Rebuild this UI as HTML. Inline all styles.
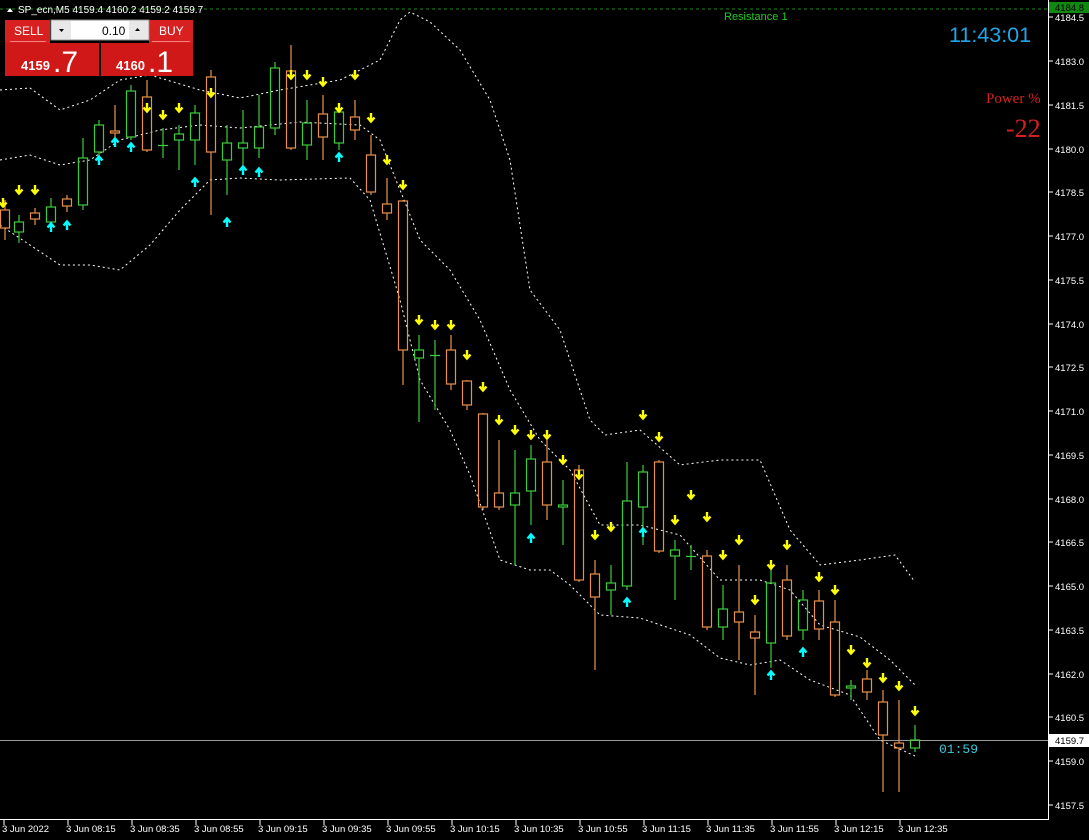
<!DOCTYPE html>
<html><head><meta charset="utf-8"><style>
html,body{margin:0;padding:0;background:#000;width:1089px;height:840px;overflow:hidden}
svg{display:block}
text{font-family:"Liberation Sans","DejaVu Sans",sans-serif}
</style></head><body>
<svg width="1089" height="840" viewBox="0 0 1089 840" xmlns="http://www.w3.org/2000/svg">
<defs>
<g id="dn"><path d="M0,-5 V3 M-3.5,-0.5 L0,3.5 L3.5,-0.5" stroke="#ffff00" stroke-width="2.4" fill="none"/></g>
<g id="up"><path d="M0,5 V-3 M-3.5,0.5 L0,-3.5 L3.5,0.5" stroke="#00ffff" stroke-width="2.4" fill="none"/></g>
</defs>
<rect width="1089" height="840" fill="#000"/>
<line x1="0" y1="9" x2="1048" y2="9" stroke="#1a8a1a" stroke-dasharray="3,3"/>
<text x="724" y="20" font-size="11" fill="#22cc22">Resistance 1</text>
<line x1="0" y1="740.5" x2="1048" y2="740.5" stroke="#9a9a9a"/>
<g fill="none" stroke="#fff" stroke-width="1" stroke-dasharray="2,3">
<polyline points="0,90 30,88 60,110 90,100 120,80 150,75 200,90 240,98 280,90 340,80 380,60 400,20 410,12 430,22 460,50 490,100 510,160 530,290 560,330 590,420 605,435 640,430 680,465 720,460 760,460 790,530 820,565 860,560 895,555 915,582"/>
<polyline points="0,160 30,155 60,165 90,160 120,140 160,130 200,125 240,128 300,122 360,125 380,140 400,190 420,240 450,270 480,320 510,390 540,440 570,470 600,525 640,525 680,535 720,580 760,580 790,590 820,625 860,637 890,660 915,685"/>
<polyline points="0,225 30,245 60,265 90,265 120,270 150,245 180,210 210,180 240,178 280,180 350,178 370,200 400,300 420,380 450,430 470,475 500,560 530,570 550,570 570,585 600,615 640,618 690,635 720,658 750,665 780,660 810,680 850,695 880,740 915,756"/>
</g>
<g fill="none" stroke-width="1.2">
<g stroke="#e8914a">
<path d="M5,200V210M5,228V240M35,208V213M35,219V225M67,195V199M67,206V212M115,105V131M115,133V140M147,80V97M147,150V152M211,70V77M211,152V215M291,45V71M291,148V150M323,95V114M323,137V160M355,100V117M355,130V140M371,135V155M371,192V195M387,178V204M387,213V220M403,200V201M403,350V385M451,335V350M451,384V390M467,380V381M467,405V410M483,413V414M483,507V510M499,440V493M499,507V510M547,440V462M547,505V520M579,465V470M579,580V582M595,560V574M595,597V670M659,460V462M659,551V553M707,550V556M707,627V630M739,565V612M739,622V660M755,615V632M755,638V695M787,565V580M787,636V640M819,590V601M819,629V640M835,600V622M835,695V697M867,670V679M867,692V700M883,690V702M883,735V792M899,700V743M899,748V792"/>
<rect x="0.5" y="210" width="9" height="18"/><rect x="30.5" y="213" width="9" height="6"/><rect x="62.5" y="199" width="9" height="7"/>
<rect x="110.5" y="131" width="9" height="2"/><rect x="142.5" y="97" width="9" height="53"/><rect x="206.5" y="77" width="9" height="75"/>
<rect x="286.5" y="71" width="9" height="77"/><rect x="318.5" y="114" width="9" height="23"/><rect x="350.5" y="117" width="9" height="13"/>
<rect x="366.5" y="155" width="9" height="37"/><rect x="382.5" y="204" width="9" height="9"/><rect x="398.5" y="201" width="9" height="149"/>
<rect x="446.5" y="350" width="9" height="34"/><rect x="462.5" y="381" width="9" height="24"/><rect x="478.5" y="414" width="9" height="93"/>
<rect x="494.5" y="493" width="9" height="14"/><rect x="542.5" y="462" width="9" height="43"/><rect x="574.5" y="470" width="9" height="110"/>
<rect x="590.5" y="574" width="9" height="23"/><rect x="654.5" y="462" width="9" height="89"/><rect x="702.5" y="556" width="9" height="71"/>
<rect x="734.5" y="612" width="9" height="10"/><rect x="750.5" y="632" width="9" height="6"/><rect x="782.5" y="580" width="9" height="56"/>
<rect x="814.5" y="601" width="9" height="28"/><rect x="830.5" y="622" width="9" height="73"/><rect x="862.5" y="679" width="9" height="13"/>
<rect x="878.5" y="702" width="9" height="33"/><rect x="894.5" y="743" width="9" height="5"/>
</g>
<g stroke="#3ccc3c">
<path d="M19,215V222M19,232V243M51,198V207M51,222V228M83,138V158M83,205V210M99,120V125M99,152V160M131,85V91M131,137V140M163,128V158M158,145.5H168M179,125V134M179,140V170M195,105V113M195,140V165M227,125V143M227,160V195M243,110V143M243,148V165M259,95V127M259,148V158M275,62V68M275,128V135M307,100V123M307,145V160M339,105V112M339,143V150M419,335V350M419,358V422M435,340V410M430,355.5H440M515,450V493M515,505V565M531,445V459M531,491V525M563,480V505M563,507V545M611,565V583M611,590V615M627,462V501M627,586V590M643,465V472M643,507V545M675,540V550M675,556V600M691,545V570M686,556.5H696M723,585V609M723,627V640M771,560V583M771,643V668M803,590V600M803,630V640M851,680V686M851,688V700M915,725V740M915,748V752"/>
<rect x="14.5" y="222" width="9" height="10"/><rect x="46.5" y="207" width="9" height="15"/><rect x="78.5" y="158" width="9" height="47"/>
<rect x="94.5" y="125" width="9" height="27"/><rect x="126.5" y="91" width="9" height="46"/><rect x="174.5" y="134" width="9" height="6"/>
<rect x="190.5" y="113" width="9" height="27"/><rect x="222.5" y="143" width="9" height="17"/><rect x="238.5" y="143" width="9" height="5"/>
<rect x="254.5" y="127" width="9" height="21"/><rect x="270.5" y="68" width="9" height="60"/><rect x="302.5" y="123" width="9" height="22"/>
<rect x="334.5" y="112" width="9" height="31"/><rect x="414.5" y="350" width="9" height="8"/><rect x="510.5" y="493" width="9" height="12"/>
<rect x="526.5" y="459" width="9" height="32"/><rect x="558.5" y="505" width="9" height="2"/><rect x="606.5" y="583" width="9" height="7"/>
<rect x="622.5" y="501" width="9" height="85"/><rect x="638.5" y="472" width="9" height="35"/><rect x="670.5" y="550" width="9" height="6"/>
<rect x="718.5" y="609" width="9" height="18"/><rect x="766.5" y="583" width="9" height="60"/><rect x="798.5" y="600" width="9" height="30"/>
<rect x="846.5" y="686" width="9" height="2"/><rect x="910.5" y="740" width="9" height="8"/>
</g>
</g>
<use href="#dn" x="3" y="203"/><use href="#dn" x="19" y="190"/><use href="#dn" x="35" y="190"/><use href="#dn" x="147" y="108"/>
<use href="#dn" x="163" y="115"/><use href="#dn" x="179" y="108"/><use href="#dn" x="211" y="93"/><use href="#dn" x="291" y="75"/>
<use href="#dn" x="307" y="75"/><use href="#dn" x="323" y="82"/><use href="#dn" x="339" y="108"/><use href="#dn" x="355" y="75"/>
<use href="#dn" x="371" y="118"/><use href="#dn" x="387" y="160"/><use href="#dn" x="403" y="185"/><use href="#dn" x="419" y="320"/>
<use href="#dn" x="435" y="325"/><use href="#dn" x="451" y="325"/><use href="#dn" x="467" y="355"/><use href="#dn" x="483" y="387"/>
<use href="#dn" x="499" y="420"/><use href="#dn" x="515" y="430"/><use href="#dn" x="531" y="435"/><use href="#dn" x="547" y="435"/>
<use href="#dn" x="563" y="460"/><use href="#dn" x="579" y="475"/><use href="#dn" x="595" y="535"/><use href="#dn" x="611" y="527"/>
<use href="#dn" x="643" y="415"/><use href="#dn" x="659" y="437"/><use href="#dn" x="675" y="520"/><use href="#dn" x="691" y="495"/>
<use href="#dn" x="707" y="517"/><use href="#dn" x="723" y="555"/><use href="#dn" x="739" y="540"/><use href="#dn" x="755" y="600"/>
<use href="#dn" x="771" y="565"/><use href="#dn" x="787" y="545"/><use href="#dn" x="819" y="577"/><use href="#dn" x="835" y="590"/>
<use href="#dn" x="851" y="650"/><use href="#dn" x="867" y="663"/><use href="#dn" x="883" y="678"/><use href="#dn" x="899" y="686"/>
<use href="#dn" x="915" y="711"/>
<use href="#up" x="51" y="227"/><use href="#up" x="67" y="225"/><use href="#up" x="99" y="160"/><use href="#up" x="115" y="142"/>
<use href="#up" x="131" y="147"/><use href="#up" x="195" y="182"/><use href="#up" x="227" y="222"/><use href="#up" x="243" y="170"/>
<use href="#up" x="259" y="172"/><use href="#up" x="339" y="157"/><use href="#up" x="531" y="538"/><use href="#up" x="627" y="602"/>
<use href="#up" x="643" y="532"/><use href="#up" x="771" y="675"/><use href="#up" x="803" y="652"/>
<text x="949" y="42" font-size="21.5" fill="#1fa6e8">11:43:01</text>
<text x="986" y="103" font-size="15" fill="#d42020" style="font-family:'Liberation Serif',serif">Power %</text>
<text x="1006" y="137" font-size="26" fill="#d42020" style="font-family:'Liberation Serif',serif">-22</text>
<text x="939" y="753" font-size="13" fill="#3cc8d8" style="font-family:'Liberation Mono',monospace">01:59</text>
<line x1="1048.5" y1="0" x2="1048.5" y2="820" stroke="#fff"/>
<line x1="0" y1="819.5" x2="1049" y2="819.5" stroke="#fff"/>
<g stroke="#fff"><path d="M1049,17H1053M1049,61H1053M1049,105H1053M1049,149H1053M1049,192H1053M1049,236H1053M1049,280H1053M1049,324H1053M1049,367H1053M1049,411H1053M1049,455H1053M1049,499H1053M1049,542H1053M1049,586H1053M1049,630H1053M1049,674H1053M1049,717H1053M1049,761H1053M1049,805H1053"/>
<path d="M4,820V825M68,820V825M132,820V825M196,820V825M260,820V825M324,820V825M388,820V825M452,820V825M516,820V825M580,820V825M644,820V825M708,820V825M772,820V825M836,820V825M900,820V825"/></g>
<g font-size="9.5" fill="#fff">
<text x="1055" y="21">4184.5</text><text x="1055" y="65">4183.0</text><text x="1055" y="109">4181.5</text><text x="1055" y="153">4180.0</text>
<text x="1055" y="196">4178.5</text><text x="1055" y="240">4177.0</text><text x="1055" y="284">4175.5</text><text x="1055" y="328">4174.0</text>
<text x="1055" y="371">4172.5</text><text x="1055" y="415">4171.0</text><text x="1055" y="459">4169.5</text><text x="1055" y="503">4168.0</text>
<text x="1055" y="546">4166.5</text><text x="1055" y="590">4165.0</text><text x="1055" y="634">4163.5</text><text x="1055" y="678">4162.0</text>
<text x="1055" y="721">4160.5</text><text x="1055" y="765">4159.0</text><text x="1055" y="809">4157.5</text>
</g>
<rect x="1049" y="2" width="40" height="11" fill="#118811"/>
<text x="1055" y="11" font-size="9.5" fill="#000">4184.8</text>
<rect x="1049" y="734" width="40" height="13" fill="#fff"/>
<text x="1055" y="744" font-size="9.5" fill="#000">4159.7</text>
<g font-size="9.5" fill="#fff">
<text x="2" y="832">3 Jun 2022</text><text x="66" y="832">3 Jun 08:15</text><text x="130" y="832">3 Jun 08:35</text><text x="194" y="832">3 Jun 08:55</text>
<text x="258" y="832">3 Jun 09:15</text><text x="322" y="832">3 Jun 09:35</text><text x="386" y="832">3 Jun 09:55</text><text x="450" y="832">3 Jun 10:15</text>
<text x="514" y="832">3 Jun 10:35</text><text x="578" y="832">3 Jun 10:55</text><text x="642" y="832">3 Jun 11:15</text><text x="706" y="832">3 Jun 11:35</text>
<text x="770" y="832">3 Jun 11:55</text><text x="834" y="832">3 Jun 12:15</text><text x="898" y="832">3 Jun 12:35</text>
</g>
<path d="M7,12 L10,8 L13,12Z" fill="#fff"/>
<text x="18" y="13" font-size="10" fill="#fff">SP_ecn,M5  4159.4 4160.2 4159.2 4159.7</text>
<rect x="5" y="20" width="45" height="23" fill="#d92020"/>
<rect x="149" y="20" width="44" height="23" fill="#d92020"/>
<rect x="5" y="43" width="94" height="33" fill="#d01818"/>
<rect x="101" y="43" width="92" height="33" fill="#d01818"/>
<line x1="10" y1="41.5" x2="46" y2="41.5" stroke="#f08080"/>
<line x1="152" y1="41.5" x2="190" y2="41.5" stroke="#f08080"/>
<rect x="51" y="20" width="98" height="20" fill="#fff" stroke="#888"/>
<rect x="52" y="21" width="19" height="18" fill="#e8e8e8"/>
<rect x="129" y="21" width="19" height="18" fill="#e8e8e8"/>
<path d="M59,29 L64,29 L61.5,32Z" fill="#000"/>
<path d="M135,31 L140,31 L137.5,28Z" fill="#000"/>
<text x="14" y="35" font-size="12" fill="#fff">SELL</text>
<text x="159" y="35" font-size="12" fill="#fff">BUY</text>
<text x="102" y="35" font-size="12" fill="#000">0.10</text>
<text x="21" y="70" font-size="13" font-weight="bold" fill="#fff">4159</text>
<text x="53" y="72" font-size="30" fill="#fff">.7</text>
<text x="116" y="70" font-size="13" font-weight="bold" fill="#fff">4160</text>
<text x="148" y="72" font-size="30" fill="#fff">.1</text>
</svg>
</body></html>
